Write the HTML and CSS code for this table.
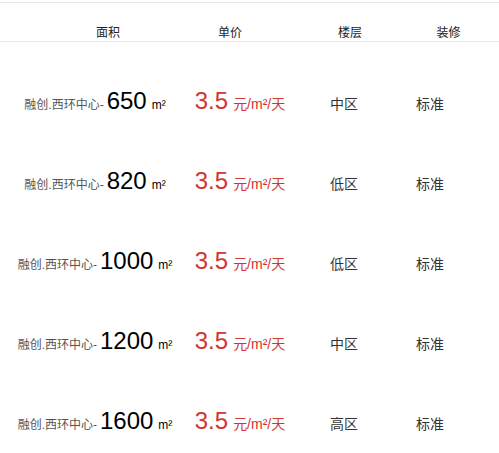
FILE: index.html
```html
<!DOCTYPE html>
<html lang="zh">
<head>
<meta charset="utf-8">
<title>房源列表</title>
<link rel="stylesheet" href="styles.css">
</head>
<body>
<div class="list">
  <div class="head">
    <span>面积</span>
    <span>单价</span>
    <span>楼层</span>
    <span>装修</span>
  </div>
  <div class="rows">
    <div class="row">
      <div class="area"><span class="name">融创.西环中心-</span><span class="num">650</span><span class="unit">m²</span></div>
      <div class="price"><span class="pnum">3.5</span><span class="punit">元/m²/天</span></div>
      <div class="floor">中区</div>
      <div class="deco">标准</div>
    </div>
    <div class="row">
      <div class="area"><span class="name">融创.西环中心-</span><span class="num">820</span><span class="unit">m²</span></div>
      <div class="price"><span class="pnum">3.5</span><span class="punit">元/m²/天</span></div>
      <div class="floor">低区</div>
      <div class="deco">标准</div>
    </div>
    <div class="row">
      <div class="area"><span class="name">融创.西环中心-</span><span class="num">1000</span><span class="unit">m²</span></div>
      <div class="price"><span class="pnum">3.5</span><span class="punit">元/m²/天</span></div>
      <div class="floor">低区</div>
      <div class="deco">标准</div>
    </div>
    <div class="row">
      <div class="area"><span class="name">融创.西环中心-</span><span class="num">1200</span><span class="unit">m²</span></div>
      <div class="price"><span class="pnum">3.5</span><span class="punit">元/m²/天</span></div>
      <div class="floor">中区</div>
      <div class="deco">标准</div>
    </div>
    <div class="row">
      <div class="area"><span class="name">融创.西环中心-</span><span class="num">1600</span><span class="unit">m²</span></div>
      <div class="price"><span class="pnum">3.5</span><span class="punit">元/m²/天</span></div>
      <div class="floor">高区</div>
      <div class="deco">标准</div>
    </div>
  </div>
</div>
</body>
</html>
```
FILE: styles.css
```css
html, body {
  margin: 0;
  padding: 0;
  background: #fff;
}
body {
  font-family: "Liberation Sans", Arial, "Noto Sans CJK SC", sans-serif;
  color: #333;
}
.list {
  padding-top: 2px;
}
.head {
  display: grid;
  grid-template-columns: 120px 124px 116px 81px;
  padding-left: 48px;
  border-top: 1px solid #e8e8e8;
  border-bottom: 1px solid #e8e8e8;
  height: 38px;
  align-items: end;
  font-size: 12px;
  line-height: 14px;
  color: #222;
}
.head span {
  text-align: center;
  padding-bottom: 1px;
}
.rows {
  padding-top: 46px;
}
.row {
  display: grid;
  grid-template-columns: 190px 100px 108px 64px;
  align-items: baseline;
  height: 80px;
  line-height: 26px;
}
.row:last-child {
  height: auto;
}
.row > div {
  text-align: center;
  white-space: nowrap;
}
.name {
  font-size: 12px;
  color: #555;
}
.num {
  font-size: 24px;
  color: #000;
  margin-left: 3px;
}
.unit {
  font-size: 12px;
  color: #000;
  margin-left: 5px;
}
.price {
  color: #d23430;
}
.pnum {
  font-size: 24px;
}
.punit {
  font-size: 14px;
  margin-left: 5px;
}
.floor, .deco {
  font-size: 14px;
  color: #333;
}
```
